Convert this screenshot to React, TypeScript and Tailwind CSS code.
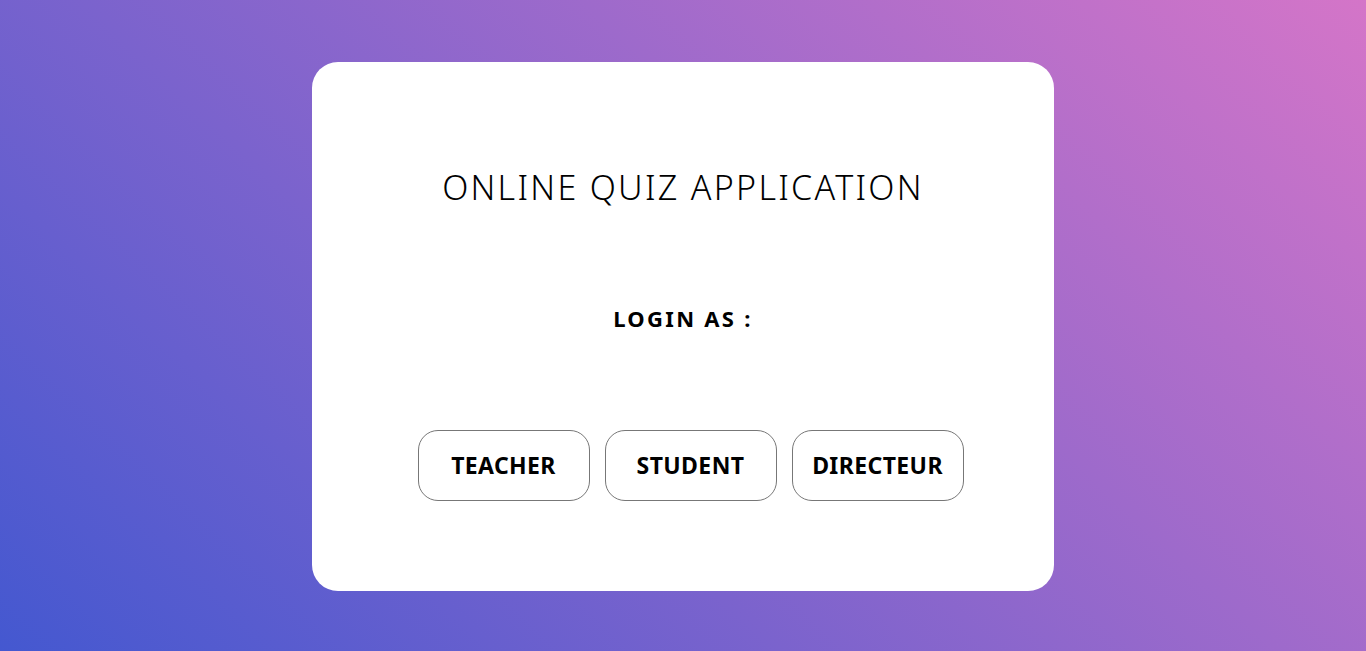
export default function App() {
  return (
    <div className="min-h-screen w-full pt-[2px] flex items-center justify-center bg-[linear-gradient(43deg,#4458d0,#d475c8)]" style={{ fontFamily: '"Noto Sans", sans-serif' }}>
      <div className="w-[742px] h-[529px] bg-white rounded-[26px] flex flex-col items-center">
        <h1 className="mt-[103px] h-[44px] leading-[44px] text-[34px] font-light tracking-[2.3px] text-black">ONLINE QUIZ APPLICATION</h1>
        <div className="mt-[94px] h-[30px] leading-[30px] text-[22px] font-bold tracking-[2.3px] text-black">LOGIN AS :</div>
        <div className="mt-[97px] ml-[15px] flex gap-[15px]">
          {["TEACHER", "STUDENT", "DIRECTEUR"].map((t) => (
            <button key={t} className="w-[172px] h-[71px] rounded-[20px] border border-[#777] bg-white text-[23px] font-bold text-black tracking-[0.4px]">
              {t}
            </button>
          ))}
        </div>
      </div>
    </div>
  );
}
